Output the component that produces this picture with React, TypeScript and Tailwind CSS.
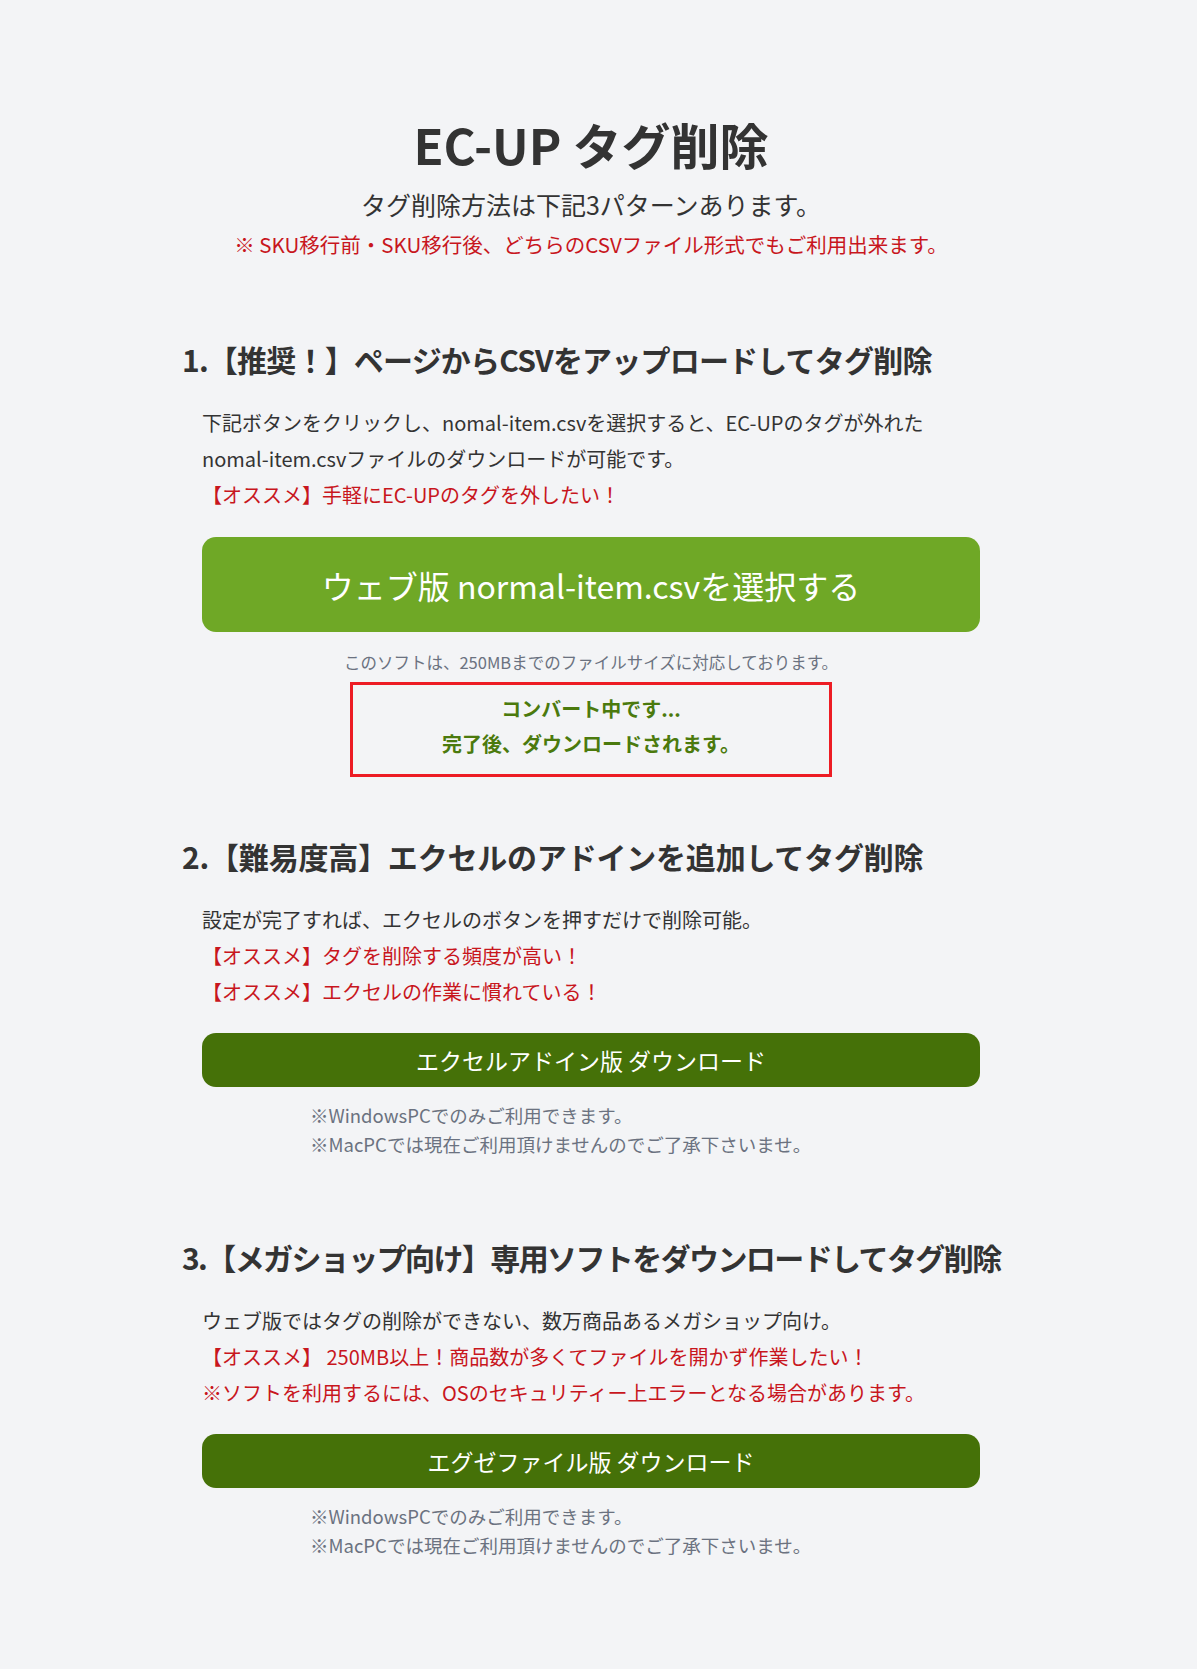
import React from 'react';

const Notes = () => (
    <div className="mt-[14px] pl-[108px] text-[18.5px] leading-[29px] text-[#6b7280]">
        <p>※WindowsPCでのみご利用できます。</p>
        <p>※MacPCでは現在ご利用頂けませんのでご了承下さいませ。</p>
    </div>
);

const DarkButton = ({ label }: { label: string }) => (
    <button className="mt-[23px] flex h-[54px] w-full items-center justify-center rounded-[14px] bg-[#457108] text-[23px] text-white">
        {label}
    </button>
);

export default function App() {
    return (
        <div className="min-h-screen bg-[#f3f4f6] font-['Noto_Sans_CJK_JP','Noto_Sans',sans-serif] text-[#333333]">
            <div className="w-[1182px]">
                <div className="mx-auto w-[818px] pt-[116px] pb-[108px]">
                    {/* header */}
                    <div className="text-center">
                        <h1 className="text-[49px] font-bold leading-[56px]">EC-UP タグ削除</h1>
                        <p className="mt-[14px] text-[25px] leading-[36px]">タグ削除方法は下記3パターンあります。</p>
                        <p className="mt-[6px] text-[20.5px] leading-[32px] text-[#c8161d]">
                            ※ SKU移行前・SKU移行後、どちらのCSVファイル形式でもご利用出来ます。
                        </p>
                    </div>

                    {/* 1 */}
                    <section className="mt-[79px]">
                        <h2 className="whitespace-nowrap text-[30px] font-bold leading-[40px] tracking-[-0.8px]">1.【推奨！】ページからCSVをアップロードしてタグ削除</h2>
                        <div className="mt-[26px] px-5">
                            <div className="text-[20px] leading-[36px]">
                                <p>
                                    下記ボタンをクリックし、nomal-item.csvを選択すると、EC-UPのタグが外れた
                                    <br />
                                    nomal-item.csvファイルのダウンロードが可能です。
                                </p>
                                <p className="text-[#c8161d]">【オススメ】手軽にEC-UPのタグを外したい！</p>
                            </div>
                            <button className="mt-[24px] flex h-[95px] w-full items-center justify-center rounded-[14px] bg-[#6fa826] text-[32px] text-white">
                                ウェブ版 normal-item.csvを選択する
                            </button>
                            <p className="mt-[18px] text-center text-[16.5px] leading-[24px] text-[#6b7280]">
                                このソフトは、250MBまでのファイルサイズに対応しております。
                            </p>
                            <div className="mx-auto mt-[8px] w-[482px] border-[3px] border-[#ed1c24] pt-[6px] pb-[13px] text-center text-[20px] font-bold leading-[35px] text-[#4b7a0d]">
                                <p>コンバート中です...</p>
                                <p>完了後、ダウンロードされます。</p>
                            </div>
                        </div>
                    </section>

                    {/* 2 */}
                    <section className="mt-[59px]">
                        <h2 className="whitespace-nowrap text-[30px] font-bold leading-[40px] tracking-[-0.2px]">2.【難易度高】エクセルのアドインを追加してタグ削除</h2>
                        <div className="mt-[26px] px-5">
                            <div className="text-[20px] leading-[36px]">
                                <p>設定が完了すれば、エクセルのボタンを押すだけで削除可能。</p>
                                <p className="text-[#c8161d]">【オススメ】タグを削除する頻度が高い！</p>
                                <p className="text-[#c8161d]">【オススメ】エクセルの作業に慣れている！</p>
                            </div>
                            <DarkButton label="エクセルアドイン版 ダウンロード" />
                            <Notes />
                        </div>
                    </section>

                    {/* 3 */}
                    <section className="mt-[78px]">
                        <h2 className="whitespace-nowrap text-[30px] font-bold leading-[40px] tracking-[-1.6px]">3.【メガショップ向け】専用ソフトをダウンロードしてタグ削除</h2>
                        <div className="mt-[26px] px-5">
                            <div className="text-[20px] leading-[36px]">
                                <p>ウェブ版ではタグの削除ができない、数万商品あるメガショップ向け。</p>
                                <p className="text-[#c8161d]">【オススメ】 250MB以上！商品数が多くてファイルを開かず作業したい！</p>
                                <p className="text-[#c8161d]">※ソフトを利用するには、OSのセキュリティー上エラーとなる場合があります。</p>
                            </div>
                            <DarkButton label="エグゼファイル版 ダウンロード" />
                            <Notes />
                        </div>
                    </section>
                </div>
            </div>
        </div>
    );
}
